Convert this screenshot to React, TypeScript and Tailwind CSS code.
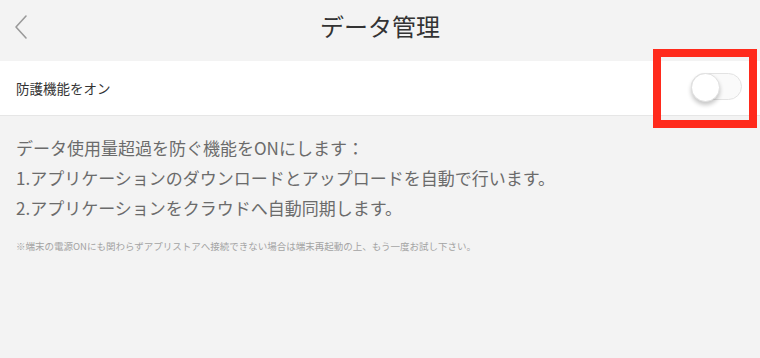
import { useState } from 'react';

const jp = { fontFamily: '"Noto Sans CJK JP", "Noto Sans", sans-serif' };

export default function App() {
  const [on, setOn] = useState(false);

  return (
    <div className="min-h-screen w-full bg-[#f3f3f3]" style={jp}>
      {/* ヘッダー */}
      <div className="relative flex h-[52px] items-center justify-center">
        <button className="absolute left-[13px] top-[14px] text-[#9a9a9a]" aria-label="back">
          <svg width="16" height="26" viewBox="0 0 16 26" fill="none">
            <path d="M13 2 L3 13 L13 24" stroke="currentColor" strokeWidth="1.6" strokeLinecap="round" strokeLinejoin="round" />
          </svg>
        </button>
        <h1 className="text-[24px] leading-none text-[#333333]">データ管理</h1>
      </div>

      {/* 設定行 */}
      <div className="mt-[9px] flex h-[55px] items-center justify-between border-b border-[#e6e6e6] bg-white pl-4 pr-[18px]">
        <span className="text-[13.5px] text-[#333333]">防護機能をオン</span>
        <div className="relative">
          <button
            onClick={() => setOn(!on)}
            className={
              'relative h-[27px] w-[51px] rounded-full border ' +
              (on ? 'border-[#4cd964] bg-[#4cd964]' : 'border-[#e3e3e3] bg-[#fafafa]')
            }
          >
            <span
              className={
                'absolute top-[-1px] h-[29px] w-[29px] rounded-full border border-[#e0e0e0] bg-white shadow-[0_3px_4px_rgba(0,0,0,0.22)] ' +
                (on ? 'left-[21px]' : 'left-[-1px]')
              }
            />
          </button>
          {/* 強調枠 */}
          <div className="pointer-events-none absolute left-[-38px] top-[-24px] h-[79px] w-[104px] border-[8px] border-[#ff2a1c]" />
        </div>
      </div>

      {/* 説明 */}
      <div className="px-4 pt-[17px] text-[17px] leading-[30px] text-[#6b6b6b]">
        <p>データ使用量超過を防ぐ機能をONにします：</p>
        <p>1.アプリケーションのダウンロードとアップロードを自動で行います。</p>
        <p>2.アプリケーションをクラウドへ自動同期します。</p>
      </div>
      <p className="mt-[16px] px-4 text-[9.5px] leading-[14px] text-[#a3a3a3]">
        ※端末の電源ONにも関わらずアプリストアへ接続できない場合は端末再起動の上、もう一度お試し下さい。
      </p>
    </div>
  );
}
